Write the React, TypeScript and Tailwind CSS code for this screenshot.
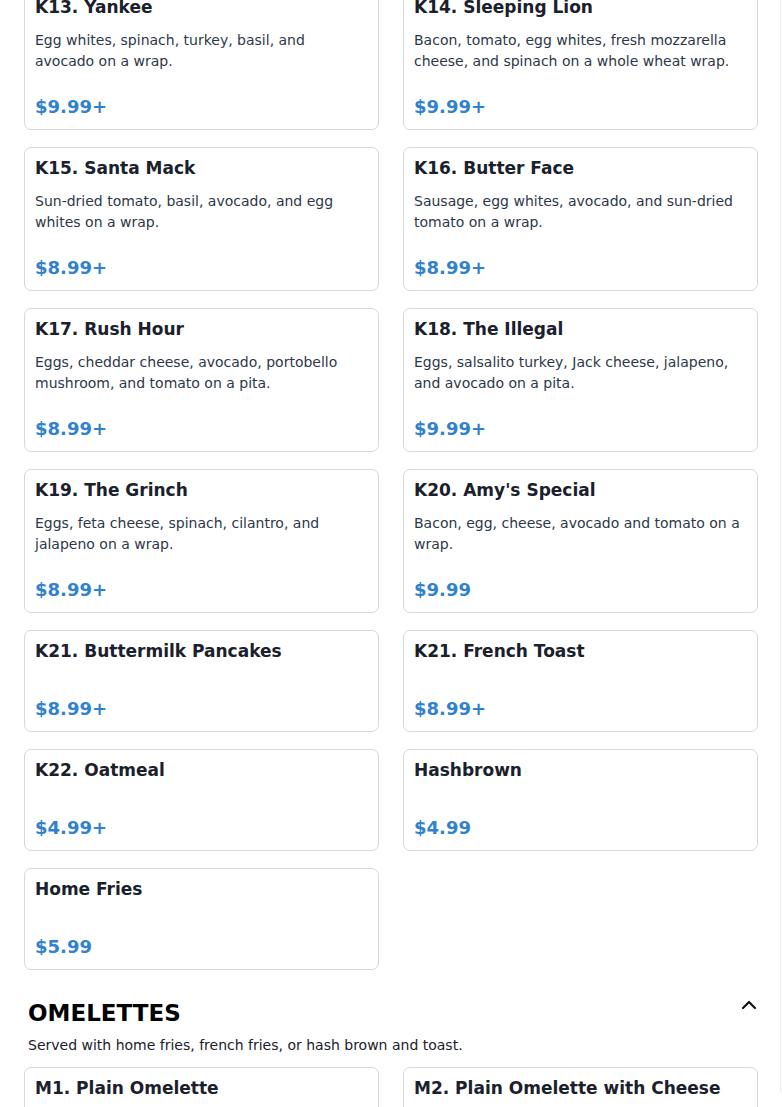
import React from "react";

type Item = { title: string; desc?: string; price: string };

const items: Item[] = [
  { title: "K13. Yankee", desc: "Egg whites, spinach, turkey, basil, and avocado on a wrap.", price: "$9.99+" },
  { title: "K14. Sleeping Lion", desc: "Bacon, tomato, egg whites, fresh mozzarella cheese, and spinach on a whole wheat wrap.", price: "$9.99+" },
  { title: "K15. Santa Mack", desc: "Sun-dried tomato, basil, avocado, and egg whites on a wrap.", price: "$8.99+" },
  { title: "K16. Butter Face", desc: "Sausage, egg whites, avocado, and sun-dried tomato on a wrap.", price: "$8.99+" },
  { title: "K17. Rush Hour", desc: "Eggs, cheddar cheese, avocado, portobello mushroom, and tomato on a pita.", price: "$8.99+" },
  { title: "K18. The Illegal", desc: "Eggs, salsalito turkey, Jack cheese, jalapeno, and avocado on a pita.", price: "$9.99+" },
  { title: "K19. The Grinch", desc: "Eggs, feta cheese, spinach, cilantro, and jalapeno on a wrap.", price: "$8.99+" },
  { title: "K20. Amy's Special", desc: "Bacon, egg, cheese, avocado and tomato on a wrap.", price: "$9.99" },
  { title: "K21. Buttermilk Pancakes", price: "$8.99+" },
  { title: "K21. French Toast", price: "$8.99+" },
  { title: "K22. Oatmeal", price: "$4.99+" },
  { title: "Hashbrown", price: "$4.99" },
  { title: "Home Fries", price: "$5.99" },
];

const omelettes: Item[] = [
  { title: "M1. Plain Omelette", price: "$9.99+" },
  { title: "M2. Plain Omelette with Cheese", price: "$10.99+" },
];

function Card({ item }: { item: Item }) {
  return (
    <div className="flex flex-col rounded-[7px] border border-[#d5d8dc] bg-white px-[10px] pt-[9px] pb-[9px]">
      <h3 className="text-[17px] leading-[22px] font-bold text-[#1a202c]">{item.title}</h3>
      <p className="mt-3 text-[14px] leading-[21px] text-[#2d3748]">{item.desc ?? ""}</p>
      <div className="mt-[21px] text-[18px] leading-[27px] font-bold text-[#3182ce]">{item.price}</div>
    </div>
  );
}

export default function App() {
  return (
    <div
      className="h-screen w-[782px] overflow-hidden bg-white"
      style={{ fontFamily: '"DejaVu Sans", sans-serif' }}
    >
      <div className="relative h-full w-full">
        <div className="-mt-[14px] pl-6">
          <div className="grid grid-cols-[355px_355px] gap-x-6 gap-y-[17px]">
            {items.map((it, i) => (
              <Card key={i} item={it} />
            ))}
          </div>
          <div className="mt-[27px] flex items-center justify-between pl-1 pr-[21px]">
            <h2 className="text-[23px] leading-[32px] font-bold text-black">OMELETTES</h2>
            <svg width="24" height="24" viewBox="0 0 24 24" fill="none" stroke="#111" strokeWidth="2.2" strokeLinecap="round" strokeLinejoin="round" className="-mt-[16px]">
              <path d="M6 15l6-6 6 6" />
            </svg>
          </div>
          <p className="mt-[6px] pl-1 text-[14px] leading-[21px] text-[#1a202c]">
            Served with home fries, french fries, or hash brown and toast.
          </p>
          <div className="mt-[11px] grid grid-cols-[355px_355px] gap-x-6 gap-y-[17px]">
            {omelettes.map((it, i) => (
              <Card key={i} item={it} />
            ))}
          </div>
        </div>
        <div className="pointer-events-none absolute top-0 right-[1px] h-full w-[1px] bg-[#ececec]" />
      </div>
    </div>
  );
}
